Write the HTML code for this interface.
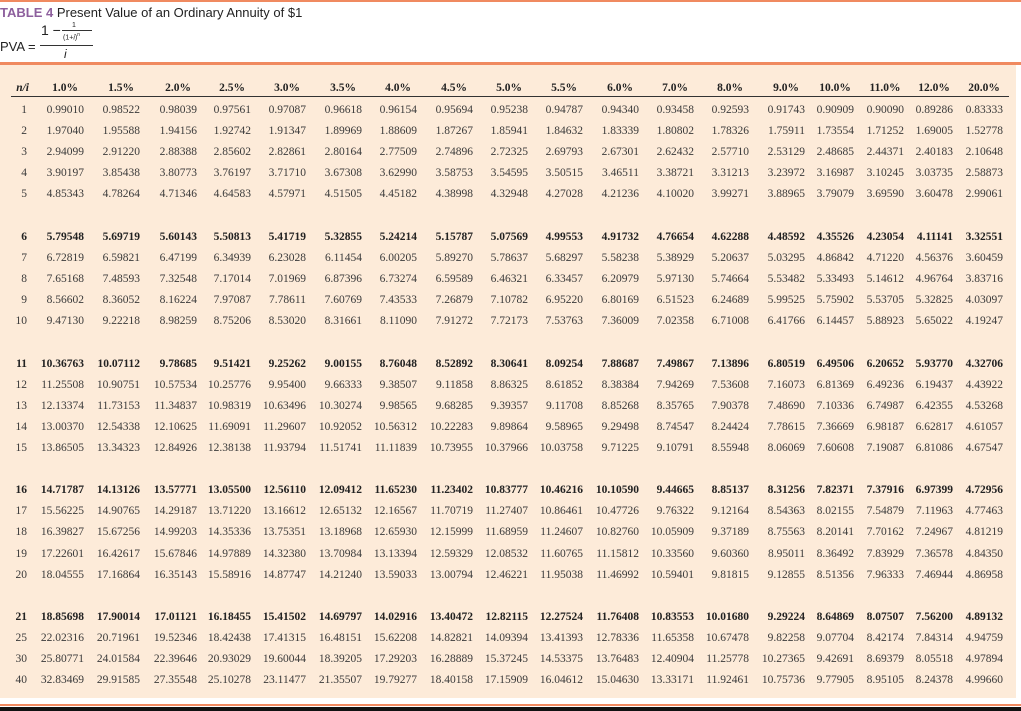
<!DOCTYPE html>
<html><head><meta charset="utf-8"><style>
*{margin:0;padding:0;box-sizing:border-box}
body{width:1021px;height:711px;background:#fff;position:relative;overflow:hidden;font-family:"Liberation Serif",serif;color:#3a3a3a}
.t{position:absolute;font-size:11.5px;line-height:14px;white-space:nowrap}
.r{text-align:right;width:60px}
.b{font-weight:bold;color:#222}
.s{font-family:"Liberation Sans",sans-serif;position:absolute;white-space:nowrap;color:#222}
</style></head><body>
<div style="position:absolute;left:0;top:0;width:1021px;height:2px;background:#f08a60"></div>
<div class="s" style="left:0;top:5px;font-size:13px;line-height:15px"><b style="color:#8d5f9d">TABLE 4</b> Present Value of an Ordinary Annuity of $1</div>
<div class="s" style="left:0;top:39px;font-size:13px">PVA =</div>
<div class="s" style="left:41px;top:22px;font-size:14px">1 −</div>
<div class="s" style="left:72px;top:22px;font-size:7px;line-height:7px">1</div>
<div style="position:absolute;left:62px;top:30px;width:30px;height:1px;background:#333"></div>
<div class="s" style="left:63px;top:31px;font-size:7px;line-height:8px">(1+<i>i</i>)<sup style="font-size:5px">n</sup></div>
<div style="position:absolute;left:40px;top:45px;width:53px;height:1px;background:#333"></div>
<div class="s" style="left:64px;top:47px;font-size:12px"><i>i</i></div>
<div style="position:absolute;left:0;top:62px;width:1021px;height:3px;background:#f08a60"></div>
<div style="position:absolute;left:0;top:65px;width:1016px;height:633px;background:#fdebd9"></div>
<div style="position:absolute;left:11px;top:96px;width:998px;height:1px;background:#333"></div>
<div style="position:absolute;left:0;top:704px;width:1021px;height:2px;background:#f08a60"></div>
<div style="position:absolute;left:0;top:707px;width:1021px;height:4px;background:#111"></div>
<div id="c"></div>
<script>
const R=[84,140,197,251,306,362,417,473,528,583,639,694,749,805,854,904,953,1003];
const H=["1.0%","1.5%","2.0%","2.5%","3.0%","3.5%","4.0%","4.5%","5.0%","5.5%","6.0%","7.0%","8.0%","9.0%","10.0%","11.0%","12.0%","20.0%"];
const D=`1 0.99010 0.98522 0.98039 0.97561 0.97087 0.96618 0.96154 0.95694 0.95238 0.94787 0.94340 0.93458 0.92593 0.91743 0.90909 0.90090 0.89286 0.83333
2 1.97040 1.95588 1.94156 1.92742 1.91347 1.89969 1.88609 1.87267 1.85941 1.84632 1.83339 1.80802 1.78326 1.75911 1.73554 1.71252 1.69005 1.52778
3 2.94099 2.91220 2.88388 2.85602 2.82861 2.80164 2.77509 2.74896 2.72325 2.69793 2.67301 2.62432 2.57710 2.53129 2.48685 2.44371 2.40183 2.10648
4 3.90197 3.85438 3.80773 3.76197 3.71710 3.67308 3.62990 3.58753 3.54595 3.50515 3.46511 3.38721 3.31213 3.23972 3.16987 3.10245 3.03735 2.58873
5 4.85343 4.78264 4.71346 4.64583 4.57971 4.51505 4.45182 4.38998 4.32948 4.27028 4.21236 4.10020 3.99271 3.88965 3.79079 3.69590 3.60478 2.99061
6 5.79548 5.69719 5.60143 5.50813 5.41719 5.32855 5.24214 5.15787 5.07569 4.99553 4.91732 4.76654 4.62288 4.48592 4.35526 4.23054 4.11141 3.32551
7 6.72819 6.59821 6.47199 6.34939 6.23028 6.11454 6.00205 5.89270 5.78637 5.68297 5.58238 5.38929 5.20637 5.03295 4.86842 4.71220 4.56376 3.60459
8 7.65168 7.48593 7.32548 7.17014 7.01969 6.87396 6.73274 6.59589 6.46321 6.33457 6.20979 5.97130 5.74664 5.53482 5.33493 5.14612 4.96764 3.83716
9 8.56602 8.36052 8.16224 7.97087 7.78611 7.60769 7.43533 7.26879 7.10782 6.95220 6.80169 6.51523 6.24689 5.99525 5.75902 5.53705 5.32825 4.03097
10 9.47130 9.22218 8.98259 8.75206 8.53020 8.31661 8.11090 7.91272 7.72173 7.53763 7.36009 7.02358 6.71008 6.41766 6.14457 5.88923 5.65022 4.19247
11 10.36763 10.07112 9.78685 9.51421 9.25262 9.00155 8.76048 8.52892 8.30641 8.09254 7.88687 7.49867 7.13896 6.80519 6.49506 6.20652 5.93770 4.32706
12 11.25508 10.90751 10.57534 10.25776 9.95400 9.66333 9.38507 9.11858 8.86325 8.61852 8.38384 7.94269 7.53608 7.16073 6.81369 6.49236 6.19437 4.43922
13 12.13374 11.73153 11.34837 10.98319 10.63496 10.30274 9.98565 9.68285 9.39357 9.11708 8.85268 8.35765 7.90378 7.48690 7.10336 6.74987 6.42355 4.53268
14 13.00370 12.54338 12.10625 11.69091 11.29607 10.92052 10.56312 10.22283 9.89864 9.58965 9.29498 8.74547 8.24424 7.78615 7.36669 6.98187 6.62817 4.61057
15 13.86505 13.34323 12.84926 12.38138 11.93794 11.51741 11.11839 10.73955 10.37966 10.03758 9.71225 9.10791 8.55948 8.06069 7.60608 7.19087 6.81086 4.67547
16 14.71787 14.13126 13.57771 13.05500 12.56110 12.09412 11.65230 11.23402 10.83777 10.46216 10.10590 9.44665 8.85137 8.31256 7.82371 7.37916 6.97399 4.72956
17 15.56225 14.90765 14.29187 13.71220 13.16612 12.65132 12.16567 11.70719 11.27407 10.86461 10.47726 9.76322 9.12164 8.54363 8.02155 7.54879 7.11963 4.77463
18 16.39827 15.67256 14.99203 14.35336 13.75351 13.18968 12.65930 12.15999 11.68959 11.24607 10.82760 10.05909 9.37189 8.75563 8.20141 7.70162 7.24967 4.81219
19 17.22601 16.42617 15.67846 14.97889 14.32380 13.70984 13.13394 12.59329 12.08532 11.60765 11.15812 10.33560 9.60360 8.95011 8.36492 7.83929 7.36578 4.84350
20 18.04555 17.16864 16.35143 15.58916 14.87747 14.21240 13.59033 13.00794 12.46221 11.95038 11.46992 10.59401 9.81815 9.12855 8.51356 7.96333 7.46944 4.86958
21 18.85698 17.90014 17.01121 16.18455 15.41502 14.69797 14.02916 13.40472 12.82115 12.27524 11.76408 10.83553 10.01680 9.29224 8.64869 8.07507 7.56200 4.89132
25 22.02316 20.71961 19.52346 18.42438 17.41315 16.48151 15.62208 14.82821 14.09394 13.41393 12.78336 11.65358 10.67478 9.82258 9.07704 8.42174 7.84314 4.94759
30 25.80771 24.01584 22.39646 20.93029 19.60044 18.39205 17.29203 16.28889 15.37245 14.53375 13.76483 12.40904 11.25778 10.27365 9.42691 8.69379 8.05518 4.97894
40 32.83469 29.91585 27.35548 25.10278 23.11477 21.35507 19.79277 18.40158 17.15909 16.04612 15.04630 13.33171 11.92461 10.75736 9.77905 8.95105 8.24378 4.99660`.split("\n");
let h='<div class="t r b" style="left:-31px;top:81px"><i>n/i</i></div>';
H.forEach((x,i)=>{h+=`<div class="t b" style="left:${R[i]-19-40}px;width:80px;text-align:center;top:81px">${x}</div>`;});
D.forEach((l,k)=>{const v=l.split(" ");const g=Math.floor(k/5),j=k%5;const y=Math.round(110+g*126.75+j*21.1-7);const bold=(j==0&&g>0)?" b":"";
h+=`<div class="t r${bold}" style="left:-33px;top:${y}px">${v[0]}</div>`;
for(let i=0;i<18;i++)h+=`<div class="t r${bold}" style="left:${R[i]-60}px;top:${y}px">${v[i+1]}</div>`;});
document.getElementById("c").innerHTML=h;
</script>
</body></html>
